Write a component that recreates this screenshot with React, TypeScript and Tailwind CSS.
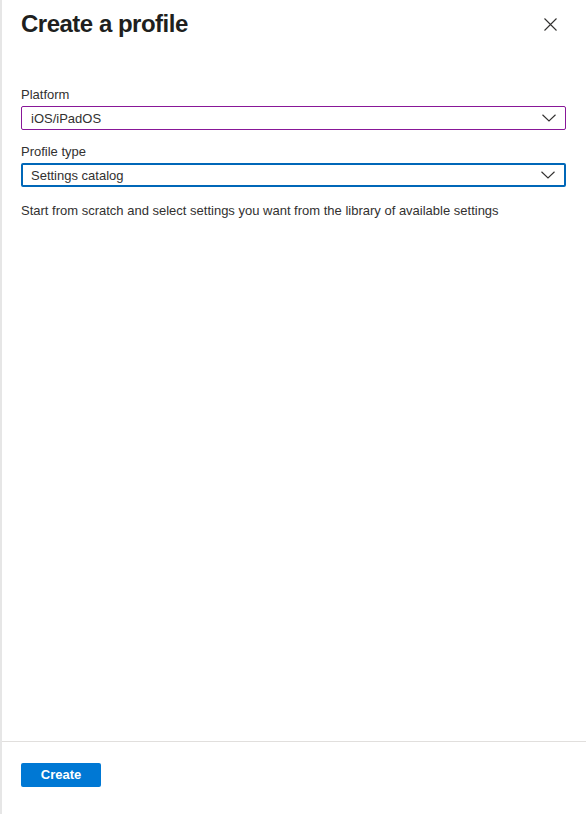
const font = { fontFamily: '"Liberation Sans", Arial, sans-serif' };

function Chevron() {
  return (
    <svg width="14" height="8" viewBox="0 0 14 8" fill="none" className="text-[#323130]">
      <path d="M0.5 0.75 L7 7 L13.5 0.75" stroke="currentColor" strokeWidth="1.1" />
    </svg>
  );
}

function Select({ value, focused }: { value: string; focused?: boolean }) {
  return (
    <div
      className={`flex h-6 items-center justify-between rounded-[2px] bg-white pr-[9px] ${
        focused ? "border-2 border-[#0067b8] pl-[8px]" : "border border-[#881798] pl-[9px]"
      }`}
    >
      <span className="text-[13px] leading-none text-[#323130]">{value}</span>
      <Chevron />
    </div>
  );
}

export default function App() {
  return (
    <div className="flex h-screen flex-col border-l-2 border-[#e6e6e6] bg-white" style={font}>
      {/* Header */}
      <div className="flex items-start justify-between pl-[19px] pr-[29px] pt-[8px]">
        <h1 className="text-[24px] font-bold leading-8 tracking-[-0.5px] text-[#201f1e]">Create a profile</h1>
        <button className="mt-[10px] text-[#323130]">
          <svg width="13" height="13" viewBox="0 0 13 13" fill="none">
            <path d="M0.5 0.5 L12.5 12.5 M12.5 0.5 L0.5 12.5" stroke="currentColor" strokeWidth="1.1" />
          </svg>
        </button>
      </div>

      {/* Body */}
      <div className="flex-1 pl-[19px] pr-5 pt-[47px]">
        <div className="space-y-[3px]">
          <label className="block text-[13px] leading-4 text-[#323130]">Platform</label>
          <Select value="iOS/iPadOS" />
        </div>
        <div className="mt-[14px] space-y-[3px]">
          <label className="block text-[13px] leading-4 text-[#323130]">Profile type</label>
          <Select value="Settings catalog" focused />
        </div>
        <p className="mt-[16px] text-[13px] leading-4 text-[#323130]">
          Start from scratch and select settings you want from the library of available settings
        </p>
      </div>

      {/* Footer */}
      <div className="border-t border-[#e1dfdd] pb-[27px] pl-[19px] pt-[20px]">
        <button className="h-6 w-20 rounded-[2px] bg-[#0078d4] text-[13px] font-bold text-white">
          Create
        </button>
      </div>
    </div>
  );
}
